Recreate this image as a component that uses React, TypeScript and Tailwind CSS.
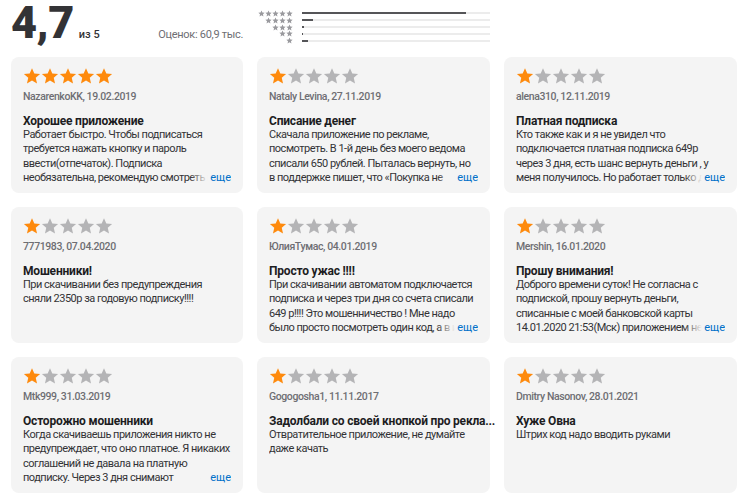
import React from 'react';

type Review = {
  rating: number;
  author: string;
  date: string;
  title: string;
  body: string;
  more: boolean;
};

const reviews: Review[] = [
  {
    rating: 5,
    author: 'NazarenkoKK',
    date: '19.02.2019',
    title: 'Хорошее приложение',
    body: 'Работает быстро. Чтобы подписаться требуется нажать кнопку и пароль ввести(отпечаток). Подписка необязательна, рекомендую смотреть как там и что',
    more: true,
  },
  {
    rating: 1,
    author: 'Nataly Levina',
    date: '27.11.2019',
    title: 'Списание денег',
    body: 'Скачала приложение по рекламе, посмотреть. В 1-й день без моего ведома списали 650 рублей. Пыталась вернуть, но в поддержке пишет, что «Покупка не подлежит возврату»',
    more: true,
  },
  {
    rating: 1,
    author: 'alena310',
    date: '12.11.2019',
    title: 'Платная подписка',
    body: 'Кто также как и я не увидел что подключается платная подписка 649р через 3 дня, есть шанс вернуть деньги , у меня получилось. Но работает только день',
    more: true,
  },
  {
    rating: 1,
    author: '7771983',
    date: '07.04.2020',
    title: 'Мошенники!',
    body: 'При скачивании без предупреждения сняли 2350р за годовую подписку!!!!',
    more: false,
  },
  {
    rating: 1,
    author: 'ЮлияТумас',
    date: '04.01.2019',
    title: 'Просто ужас !!!!',
    body: 'При скачивании автоматом подключается подписка и через три дня со счета списали 649 р!!!! Это мошенничество ! Мне надо было просто посмотреть один код, а в итоге',
    more: true,
  },
  {
    rating: 1,
    author: 'Mershin',
    date: '16.01.2020',
    title: 'Прошу внимания!',
    body: 'Доброго времени суток! Не согласна с подпиской, прошу вернуть деньги, списанные с моей банковской карты 14.01.2020 21:53(Мск) приложением не спрашивая',
    more: true,
  },
  {
    rating: 1,
    author: 'Mtk999',
    date: '31.03.2019',
    title: 'Осторожно мошенники',
    body: 'Когда скачиваешь приложения никто не предупреждает, что оно платное. Я никаких соглашений не давала на платную подписку. Через 3 дня снимают автоматически',
    more: true,
  },
  {
    rating: 1,
    author: 'Gogogosha1',
    date: '11.11.2017',
    title: 'Задолбали со своей кнопкой про рекла...',
    body: 'Отвратительное приложение, не думайте даже качать',
    more: false,
  },
  {
    rating: 1,
    author: 'Dmitry Nasonov',
    date: '28.01.2021',
    title: 'Хуже Овна',
    body: 'Штрих код надо вводить руками',
    more: false,
  },
];

const histogram = [87, 6, 1, 0.5, 3];

const Star = ({ size, color }: { size: number; color: string }) => (
  <svg width={size} height={size} viewBox="0 0 24 24">
    <path
      d="M12 1.5l3.1 7.1 7.7.7-5.8 5.1 1.7 7.6L12 18.1 5.3 22l1.7-7.6L1.2 9.3l7.7-.7z"
      fill={color}
    />
  </svg>
);

const ReviewCard = ({ review }: { review: Review }) => (
  <div className="h-[136px] rounded-lg bg-[#f4f4f4] px-3 pt-[10px]">
    <div className="flex">
      {[0, 1, 2, 3, 4].map((i) => (
        <Star key={i} size={18} color={i < review.rating ? '#fe8a0d' : '#b4b4b6'} />
      ))}
    </div>
    <div className="mt-[5px] text-[10.5px] font-medium leading-[14px] tracking-[-0.4px] text-[#6e6e73]">
      {review.author}, {review.date}
    </div>
    <div className="mt-[10px] text-[12px] font-bold leading-[14px] tracking-[-0.2px] text-[#1d1d1f] whitespace-nowrap">
      {review.title}
    </div>
    <div className="relative h-[58px] overflow-hidden text-[11px] leading-[14.3px] tracking-[-0.5px] text-[#333336]">
      {review.body}
      {review.more && (
        <span className="absolute right-0 top-[43px] flex h-[14.3px] items-center">
          <span className="h-full w-[18px] bg-gradient-to-r from-[#f4f4f4]/0 to-[#f4f4f4]" />
          <span className="h-full bg-[#f4f4f4] pl-[2px] tracking-normal text-[#0070c9]">еще</span>
        </span>
      )}
    </div>
  </div>
);

const App: React.FC = () => {
  return (
    <div
      className="h-[500px] w-[750px] bg-white px-[11px]"
      style={{ fontFamily: 'Roboto, "Liberation Sans", sans-serif' }}
    >
      {/* Header */}
      <div className="grid h-[57px] grid-cols-[232px_233px_233px] gap-x-[14px]">
        <div className="flex items-end justify-between pb-[12px]">
          <div className="flex items-end">
            <span className="text-[45px] font-black leading-[44px] tracking-[-0.5px] text-[#333336]">4,7</span>
            <span className="mb-[2px] ml-[5px] text-[11px] font-medium text-[#333336]">из 5</span>
          </div>
          <span className="mb-[2px] text-[11px] tracking-[-0.3px] text-[#6e6e73]">Оценок: 60,9 тыс.</span>
        </div>
        <div className="flex flex-col pt-[10px]">
          {histogram.map((v, idx) => (
            <div key={idx} className="flex h-[6.8px] items-center">
              <div className="flex w-[36px] justify-end">
                {Array.from({ length: 5 - idx }).map((_, i) => (
                  <Star key={i} size={7} color="#9a9a9e" />
                ))}
              </div>
              <div className="ml-[9px] h-[2px] flex-1 bg-[#ececec]">
                <div className="h-full bg-[#555558]" style={{ width: `${v}%` }} />
              </div>
            </div>
          ))}
        </div>
        <div />
      </div>

      {/* Reviews */}
      <div className="grid grid-cols-[232px_233px_233px] gap-x-[14px] gap-y-[14px]">
        {reviews.map((r, i) => (
          <ReviewCard key={i} review={r} />
        ))}
      </div>
    </div>
  );
};

export default App;
